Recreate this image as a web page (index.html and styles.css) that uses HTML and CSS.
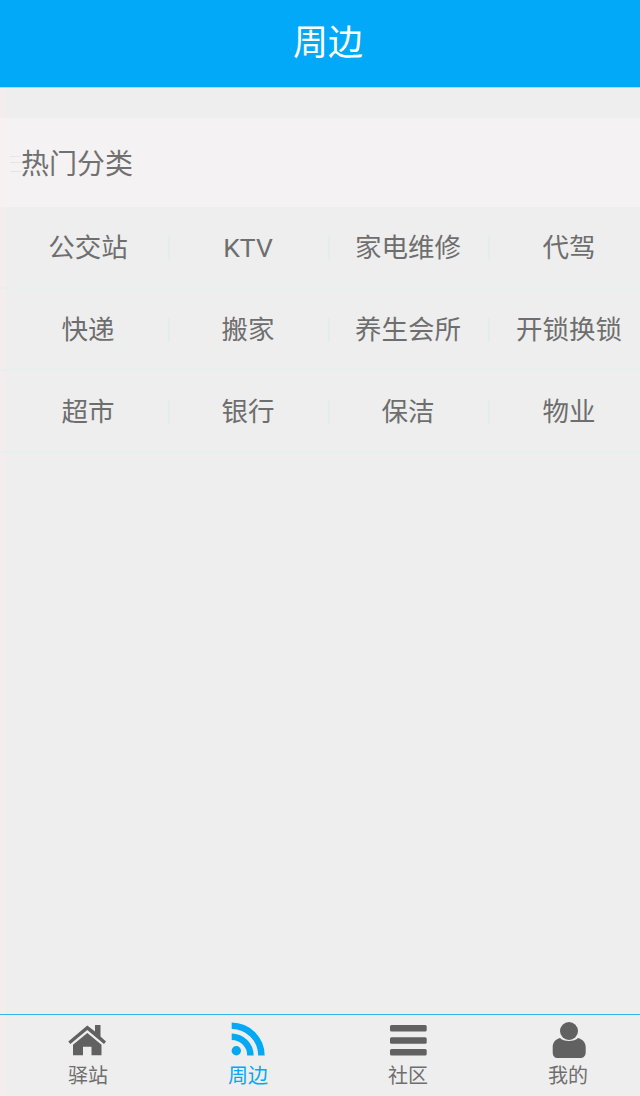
FILE: index.html
```html
<!DOCTYPE html>
<html lang="zh">
<head>
    <meta charset="UTF-8">
    <title>周边</title>
    <link rel="stylesheet" href="styles.css">
</head>
<body>
    <header class="top-bar">周边</header>

    <main class="content">
        <h2 class="section-title">热门分类</h2>
        <div class="cat-row">
            <a class="cat-item">公交站</a>
            <a class="cat-item">KTV</a>
            <a class="cat-item">家电维修</a>
            <a class="cat-item">代驾</a>
        </div>
        <div class="cat-row">
            <a class="cat-item">快递</a>
            <a class="cat-item">搬家</a>
            <a class="cat-item">养生会所</a>
            <a class="cat-item">开锁换锁</a>
        </div>
        <div class="cat-row">
            <a class="cat-item">超市</a>
            <a class="cat-item">银行</a>
            <a class="cat-item">保洁</a>
            <a class="cat-item">物业</a>
        </div>
    </main>

    <nav class="tab-bar">
        <a class="tab">
            <svg class="tab-icon" viewBox="0 0 40 36" width="40" height="36">
                <path d="M19.300 3.500 L0.300 19.500 L2.300 22 L19.300 8 L36 22 L38 19.500 L32.500 14.500 V3 H27 V9.500 Z"/>
                <path d="M19.300 11 L5 22.800 V33.300 H15 V24.700 H23.500 V33.300 H33.500 V22.800 Z"/>
            </svg>
            <span>驿站</span>
        </a>
        <a class="tab active">
            <svg class="tab-icon" viewBox="0 0 40 36" width="40" height="36">
                <circle cx="8.300" cy="28.700" r="4.700"/>
                <path d="M3.700 11.500 A22 22 0 0 1 25.700 33.500 H19.200 A15.500 15.500 0 0 0 3.700 18 Z"/>
                <path d="M3.700 0.500 A33 33 0 0 1 36.700 33.500 H30.200 A26.500 26.500 0 0 0 3.700 7 Z"/>
            </svg>
            <span>周边</span>
        </a>
        <a class="tab">
            <svg class="tab-icon" viewBox="0 0 40 36" width="40" height="36">
                <rect x="2" y="3" width="36.700" height="6.500" rx="1.500"/>
                <rect x="2" y="15.300" width="36.700" height="6.500" rx="1.500"/>
                <rect x="2" y="27" width="36.700" height="6.500" rx="1.500"/>
            </svg>
            <span>社区</span>
        </a>
        <a class="tab">
            <svg class="tab-icon" viewBox="0 0 40 36" width="40" height="36">
                <circle cx="21" cy="9" r="9"/>
                <path d="M12 16 C15 20 27 20 30 16 C34 17 37.700 20 37.700 25 V30 C37.700 34 35.500 36 32 36 H10 C6.500 36 4.700 34 4.700 30 V25 C4.700 20 8 17 12 16 Z"/>
            </svg>
            <span>我的</span>
        </a>
    </nav>
</body>
</html>
```

FILE: styles.css
```css
body {
    margin: 0;
    padding: 0;
    display: flex;
    flex-direction: column;
    height: 1096px;
    overflow: hidden;
    font-family: "Roboto", "Noto Sans CJK SC", sans-serif;
    color: #6e6e6e;
    background: linear-gradient(to right, #f3eeed 6px, #eeeeee 6px);
}
.top-bar {
    height: 87px;
    line-height: 87px;
    padding-left: 16px;
    text-align: center;
    font-size: 35px;
    color: #fff;
    background-color: #03a9f9;
    border-bottom: 1px solid #a5dcf6;
    flex-shrink: 0;
}
.content {
    flex: 1;
    padding-top: 30px;
}
.section-title {
    position: relative;
    margin: 0;
    height: 89px;
    line-height: 93px;
    padding-left: 21px;
    font-size: 28px;
    font-weight: normal;
    color: #707070;
    background: linear-gradient(to right, #f7f2f0 6px, #f5f2f3 6px);
}
.section-title::before {
    content: "";
    position: absolute;
    left: 10px;
    top: 38px;
    width: 11px;
    height: 16px;
    background: linear-gradient(to bottom, #e9e6e6 1px, transparent 1px, transparent 6px, #e6e3e3 6px, #e6e3e3 7px, transparent 7px, transparent 15px, #e6e3e3 15px);
}
.cat-row {
    display: flex;
    height: 82px;
    box-sizing: border-box;
    padding: 2px 0 0 10px;
    align-items: center;
    border-bottom: 2px solid #e7f0ed;
}
.cat-item {
    flex: 0 0 160px;
    box-sizing: border-box;
    padding-right: 2px;
    text-align: center;
    font-size: 26.500px;
    line-height: 24px;
    height: 24px;
    border-right: 2px solid #e3eeec;
    white-space: nowrap;
}
.cat-item:last-child {
    padding-right: 0;
    border-right-color: transparent;
}
.tab-bar {
    height: 82px;
    flex-shrink: 0;
    display: flex;
    padding-left: 8px;
    box-sizing: border-box;
    border-top: 1px solid #2fb4f2;
}
.tab {
    flex: 0 0 160px;
    display: flex;
    flex-direction: column;
    align-items: center;
    padding-top: 7px;
    font-size: 20px;
    line-height: 36px;
}
.tab-icon {
    display: block;
    fill: #616161;
}
.tab.active {
    color: #03a9f4;
}
.tab.active .tab-icon {
    fill: #03a9f4;
}
```
